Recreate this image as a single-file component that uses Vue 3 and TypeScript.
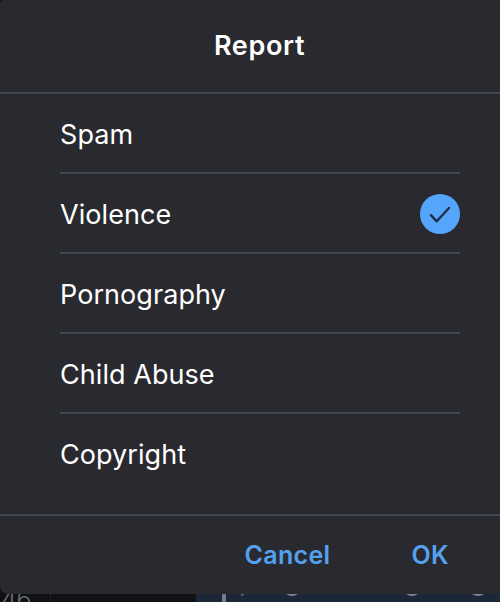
<script setup lang="ts">
import { ref } from 'vue'

const reasons: string[] = ['Spam', 'Violence', 'Pornography', 'Child Abuse', 'Copyright']
const selected = ref<string>('Violence')
</script>

<template>
  <div class="screen">
    <section class="dialog" role="dialog" aria-labelledby="report-title">
      <header class="header">
        <h1 id="report-title" class="title">Report</h1>
      </header>
      <ul class="list">
        <li v-for="reason in reasons" :key="reason" class="row" @click="selected = reason">
          <span class="label">{{ reason }}</span>
          <svg v-if="selected === reason" class="check" viewBox="0 0 40 40">
            <circle cx="20" cy="20" r="20" fill="#54a5fb" />
            <path d="M10.9 21.2 16.7 27.3 29 14" fill="none" stroke="#1d3247" stroke-width="2.4" stroke-linecap="round" stroke-linejoin="round" />
          </svg>
        </li>
      </ul>
      <footer class="footer">
        <button class="action cancel" type="button">Cancel</button>
        <button class="action ok" type="button">OK</button>
      </footer>
    </section>
    <div class="editor">
      <div class="gutter"><span class="number">46</span></div>
      <div class="margin"></div>
      <div class="selection">
        <svg class="descenders" viewBox="0 0 304 8">
          <path d="M26 0h4v8h-4z" fill="#777b80" />
          <path d="M45 0h3l-1 1.5h-2z" fill="#67707c" />
          <path d="M90 0h12q-6 3.8-12 0zM210 0h12q-6 3.8-12 0zM276 0h12q-6 3.8-12 0z" fill="#7d8490" />
        </svg>
      </div>
    </div>
  </div>
</template>

<style>
body {
  margin: 0;
  background: #101113;
}
</style>

<style scoped>
.screen {
  width: 500px;
  height: 602px;
  overflow: hidden;
  position: relative;
  display: flex;
  flex-direction: column;
  background: #101113;
  font-family: Inter, "Liberation Sans", sans-serif;
}
.dialog {
  height: 594px;
  flex: none;
  position: relative;
  z-index: 1;
  display: flex;
  flex-direction: column;
  background: #292a2f;
  border-radius: 4px 0 0 8px;
}
.header {
  height: 92px;
  display: flex;
  align-items: center;
  justify-content: center;
  border-bottom: 2px solid #40484f;
  padding-left: 19px;
}
.title {
  margin: 0;
  font-size: 27px;
  line-height: 32px;
  font-weight: 600;
  letter-spacing: 0.65px;
  color: #fff;
}
.list {
  flex: 1;
  list-style: none;
  margin: 0;
  padding: 0 40px 0 60px;
}
.row {
  height: 80px;
  box-sizing: border-box;
  display: flex;
  align-items: center;
  justify-content: space-between;
  padding-top: 2px;
  border-bottom: 2px solid #40484f;
}
.row:last-child {
  border-bottom-color: transparent;
}
.label {
  padding-top: 2px;
  font-size: 27px;
  line-height: 32px;
  letter-spacing: 0.06px;
  color: #fff;
}
.check {
  width: 40px;
  height: 40px;
  display: block;
}
.footer {
  height: 80px;
  box-sizing: border-box;
  display: flex;
  align-items: center;
  justify-content: flex-end;
  gap: 81px;
  padding: 0 51px 1px 0;
  border-top: 2px solid #40484f;
}
.action {
  padding: 0;
  border: 0;
  background: none;
  color: #54a1ef;
  font: 600 25px/32px Inter, "Liberation Sans", sans-serif;
  letter-spacing: 0.35px;
}
.editor {
  height: 18px;
  flex: none;
  margin-top: -10px;
  display: flex;
  align-items: flex-end;
}
.gutter {
  width: 50px;
  height: 18px;
  border-right: 1px solid #202225;
}
.number {
  display: block;
  padding-left: 1px;
  font-size: 25px;
  font-weight: 300;
  line-height: 30px;
  letter-spacing: -0.3px;
  color: #6a6d72;
}
.margin {
  width: 145px;
}
.selection {
  flex: 1;
  height: 8px;
  background: #1c273a;
}
.descenders {
  display: block;
  width: 304px;
  height: 8px;
}
</style>
